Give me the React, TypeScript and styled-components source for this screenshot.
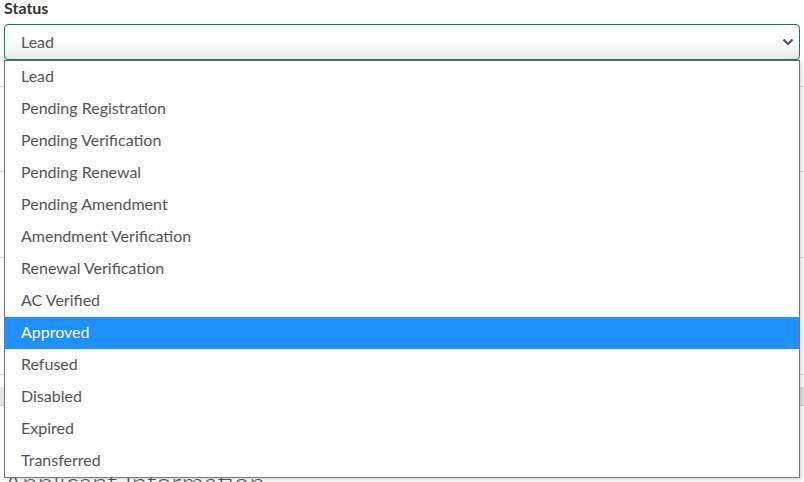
import { useState } from 'react';
import styled, { createGlobalStyle } from 'styled-components';

const statuses = [
  'Lead',
  'Pending Registration',
  'Pending Verification',
  'Pending Renewal',
  'Pending Amendment',
  'Amendment Verification',
  'Renewal Verification',
  'AC Verified',
  'Approved',
  'Refused',
  'Disabled',
  'Expired',
  'Transferred',
];

const GlobalStyle = createGlobalStyle`
  body {
    margin: 0;
    background: #fff;
    font-family: Lato, "Open Sans", sans-serif;
  }
`;

export const App = () => {
  const [value] = useState('Lead');
  const [hovered, setHovered] = useState('Approved');

  return (
    <Page>
      <GlobalStyle />
      <Label>Status</Label>
      <Field>
        <SelectBox>
          <span>{value}</span>
          <svg width="12" height="8" viewBox="0 0 12 8">
            <path d="M1.5 1.5 L6 6 L10.5 1.5" fill="none" stroke="#555" strokeWidth="2.2" />
          </svg>
        </SelectBox>
        <Dropdown>
          {statuses.map((s) => (
            <Option key={s} $active={s === hovered} onMouseEnter={() => setHovered(s)}>
              {s}
            </Option>
          ))}
        </Dropdown>
      </Field>
      <FormRow $height={27} />
      <FormRow $height={85} />
      <FormRow $height={86} />
      <FormRow $height={117} />
      <Spacer />
      <GrayBar />
      <SectionTitle>Applicant Information</SectionTitle>
    </Page>
  );
};

const Page = styled.div`
  padding: 0 4px;
  overflow: hidden;
  height: 482px;
  box-sizing: border-box;
`;

const Label = styled.div`
  font-size: 16px;
  font-weight: 700;
  color: #333;
  line-height: 16px;
  margin-bottom: 8px;
`;

const Field = styled.div`
  position: relative;
  z-index: 2;
`;

const SelectBox = styled.div`
  display: flex;
  align-items: center;
  justify-content: space-between;
  height: 36px;
  box-sizing: border-box;
  padding: 0 5px 2px 16px;
  border: 1px solid #127a66;
  border-radius: 4px;
  background: linear-gradient(#ffffff 40%, #ececec);
  font-size: 16px;
  color: #555;

  svg {
    margin-top: 2px;
  }
`;

const Dropdown = styled.div`
  position: absolute;
  top: 36px;
  left: 0;
  right: 0;
  background: #fff;
  border: 1px solid #767676;
  border-top-color: #666;
  box-shadow: 2px 2px 4px rgba(0, 0, 0, 0.15);
`;

const Option = styled.div<{ $active: boolean }>`
  height: 32px;
  line-height: 30px;
  padding: 0 0 2px 16px;
  box-sizing: border-box;
  font-size: 16px;
  color: ${(p) => (p.$active ? '#fff' : '#555')};
  background: ${(p) => (p.$active ? '#1e90ff' : 'transparent')};
  cursor: default;
`;

const FormRow = styled.div<{ $height: number }>`
  height: ${(p) => p.$height}px;
  box-sizing: border-box;
  border-bottom: 1px solid #ddd;
  margin: 0 -4px;
`;

const Spacer = styled.div`
  height: 12px;
`;

const GrayBar = styled.div`
  height: 18px;
  margin: 0 -4px;
  background: #e4e4e4;
  border-bottom: 1px solid #d0d0d0;
`;

const SectionTitle = styled.h2`
  margin: 58px 0 0;
  font-size: 28px;
  font-weight: 300;
  color: #555;
  line-height: 36px;
`;

export default App;
